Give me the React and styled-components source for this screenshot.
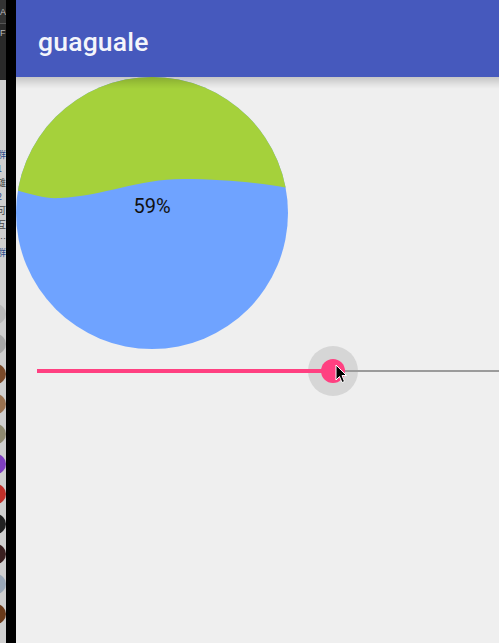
import React from "react";
import styled, { createGlobalStyle } from "styled-components";

const Global = createGlobalStyle`
  html, body { margin: 0; padding: 0; background: #efefef; }
  body { font-family: Roboto, "Noto Sans", sans-serif; overflow: hidden; }
`;

const Page = styled.div`
  display: flex;
  width: 499px;
  height: 643px;
  overflow: hidden;
`;

const DesktopStrip = styled.div`
  width: 6px;
  flex: none;
  display: flex;
  flex-direction: column;
  background: #cfcfcf;
  overflow: hidden;
`;

const StripTop = styled.div`
  height: 80px;
  flex: none;
  background: #2d2d2d;
  box-sizing: border-box;
  color: #bbb;
  font: 9px "Liberation Sans", sans-serif;
  line-height: 12px;
  display: flex;
  flex-direction: column;
`;

const StripTopRow = styled.div`
  height: ${(p) => p.$h}px;
  box-sizing: border-box;
  padding-top: ${(p) => p.$pad}px;
  background: ${(p) => p.$bg};
  border-bottom: ${(p) => (p.$line ? "1px solid #555" : "none")};
  overflow: hidden;
`;

const StripTexts = styled.div`
  display: flex;
  flex-direction: column;
  padding-top: 68px;
`;

const StripText = styled.div`
  margin-left: -3px;
  font: 9px "Noto Sans CJK SC", sans-serif;
  line-height: 14px;
  height: 14px;
  overflow: hidden;
  color: ${(p) => p.$color || "#444"};
  white-space: nowrap;
`;

const Avatar = styled.div`
  width: 20px;
  height: 20px;
  border-radius: 50%;
  margin-left: -14px;
  margin-top: ${(p) => p.$gap}px;
  background: ${(p) => p.$color};
  flex: none;
`;

const BlackBar = styled.div`
  width: 10px;
  flex: none;
  background: #000;
`;

const AppFrame = styled.div`
  flex: 1;
  display: flex;
  flex-direction: column;
  background: #efefef;
  min-width: 0;
`;

const Toolbar = styled.header`
  height: 77px;
  flex: none;
  background: #4659bd;
  box-sizing: border-box;
  padding: 27px 0 0 22px;
  position: relative;
  z-index: 2;
  &::after {
    content: "";
    position: absolute;
    left: 0;
    right: 0;
    top: 77px;
    height: 12px;
    background: linear-gradient(
      to bottom,
      rgba(0, 0, 0, 0.17) 0%,
      rgba(0, 0, 0, 0.12) 30%,
      rgba(0, 0, 0, 0.06) 60%,
      rgba(0, 0, 0, 0) 100%
    );
  }
`;

const Title = styled.h1`
  margin: 0;
  font-family: Roboto, sans-serif;
  font-weight: 500;
  font-size: 26.5px;
  line-height: 30px;
  color: #f4f5fb;
  letter-spacing: 0.2px;
`;

const Content = styled.main`
  display: flex;
  flex-direction: column;
  position: relative;
`;

const PieSvg = styled.svg`
  display: block;
  width: 272px;
  height: 272px;
  flex: none;
`;

const SliderRow = styled.div`
  position: relative;
  margin-top: 20px;
  margin-left: 21px;
  height: 4px;
  display: flex;
  align-items: center;
`;

const ActiveTrack = styled.div`
  position: relative;
  z-index: 1;
  height: 4px;
  background: #ff4081;
  flex: none;
`;

const RestTrack = styled.div`
  position: relative;
  z-index: 1;
  height: 2px;
  flex: 1;
  background: #9b9b9b;
`;

const Halo = styled.div`
  position: absolute;
  z-index: 0;
  width: 50px;
  height: 50px;
  border-radius: 50%;
  background: #d6d6d6;
  top: 50%;
  transform: translate(-50%, -50%);
`;

const Thumb = styled.div`
  position: absolute;
  z-index: 2;
  width: 24px;
  height: 24px;
  border-radius: 50%;
  background: #ff4081;
  top: 50%;
  transform: translate(-50%, -50%);
`;

const Cursor = styled.svg`
  position: absolute;
  z-index: 3;
  width: 13px;
  height: 20px;
  top: -5px;
`;

const avatars = [
  { c: "#b9b9b9", g: 44 },
  { c: "#a8a8a8", g: 10 },
  { c: "#7a4a2a", g: 10 },
  { c: "#9a7250", g: 10 },
  { c: "#8f8a70", g: 10 },
  { c: "#7f3fc0", g: 10 },
  { c: "#c0302a", g: 10 },
  { c: "#222", g: 10 },
  { c: "#3a2020", g: 10 },
  { c: "#9aa8b8", g: 10 },
  { c: "#6a3a1a", g: 10 },
];

export default function App() {
  const value = 296; // px from slider start to thumb centre
  return (
    <>
      <Global />
      <Page>
        <DesktopStrip>
          <StripTop>
            <StripTopRow $h={24} $pad={6} $bg="#333" $line>
              A
            </StripTopRow>
            <StripTopRow $h={56} $pad={3} $bg="#2a2a2a">
              F
            </StripTopRow>
          </StripTop>
          <StripTexts>
            <StripText $color="#2b4a8a">群</StripText>
            <StripText $color="#2b4a8a">1</StripText>
            <StripText>雄</StripText>
            <StripText $color="#2b4a8a">2</StripText>
            <StripText>可</StripText>
            <StripText>互</StripText>
            <StripText>…</StripText>
            <StripText $color="#2b4a8a">群</StripText>
          </StripTexts>
          {avatars.map((a, i) => (
            <Avatar key={i} $color={a.c} $gap={a.g} />
          ))}
        </DesktopStrip>
        <BlackBar />
        <AppFrame>
          <Toolbar>
            <Title>guaguale</Title>
          </Toolbar>
          <Content>
            <PieSvg viewBox="0 0 272 272">
              <defs>
                <clipPath id="pieClip">
                  <circle cx="136" cy="136" r="136" />
                </clipPath>
              </defs>
              <g clipPath="url(#pieClip)">
                <rect x="0" y="0" width="272" height="272" fill="#6fa3ff" />
                <path
                  d="M0,0 L0,113 C18,118 30,122 44,121 C88,119 122,102 167,102 C208,102 244,106 272,111 L272,0 Z"
                  fill="#a5d13b"
                />
              </g>
              <text
                x="136"
                y="136"
                textAnchor="middle"
                fontFamily="Roboto, sans-serif"
                fontSize="20"
                fill="#111"
              >
                59%
              </text>
            </PieSvg>
            <SliderRow>
              <ActiveTrack style={{ width: value }} />
              <RestTrack />
              <Halo style={{ left: value }} />
              <Thumb style={{ left: value }} />
              <Cursor viewBox="0 0 13 20" style={{ left: value + 2 }}>
                <path
                  d="M1,1 L1,16 L4.5,12.5 L7,18.5 L9.5,17.5 L7,11.5 L11.5,11.5 Z"
                  fill="#000"
                  stroke="#fff"
                  strokeWidth="1"
                  strokeLinejoin="round"
                />
              </Cursor>
            </SliderRow>
          </Content>
        </AppFrame>
      </Page>
    </>
  );
}
